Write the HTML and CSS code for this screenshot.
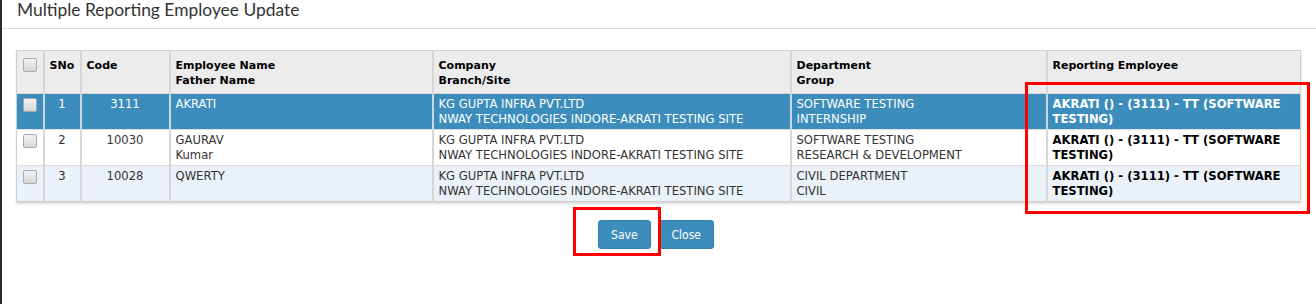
FILE: index.html
```html
<!DOCTYPE html>
<html lang="en">
<head>
  <meta charset="UTF-8" />
  <meta name="viewport" content="width=device-width, initial-scale=1" />
  <title>Multiple Reporting Employee Update</title>
  <link rel="stylesheet" href="styles.css">
</head>
<body>
  <div class="modal">
    <div class="modal-header">
      <h4>Multiple Reporting Employee Update</h4>
    </div>

    <div class="modal-body">
      <table class="grid">
        <colgroup>
          <col class="col-check">
          <col class="col-sno">
          <col class="col-code">
          <col class="col-emp">
          <col class="col-company">
          <col class="col-dept">
          <col class="col-rep">
        </colgroup>
        <thead>
          <tr>
            <th><span class="chk"></span></th>
            <th>SNo</th>
            <th>Code</th>
            <th>Employee Name<br>Father Name</th>
            <th>Company<br>Branch/Site</th>
            <th>Department<br>Group</th>
            <th>Reporting Employee</th>
          </tr>
        </thead>
        <tbody>
          <tr class="selected">
            <td><span class="chk"></span></td>
            <td class="center">1</td>
            <td class="center">3111</td>
            <td>AKRATI</td>
            <td>KG GUPTA INFRA PVT.LTD<br>NWAY TECHNOLOGIES INDORE-AKRATI TESTING SITE</td>
            <td>SOFTWARE TESTING<br>INTERNSHIP</td>
            <td class="rep">AKRATI () - (3111) - TT (SOFTWARE TESTING)</td>
          </tr>
          <tr>
            <td><span class="chk"></span></td>
            <td class="center">2</td>
            <td class="center">10030</td>
            <td>GAURAV<br>Kumar</td>
            <td>KG GUPTA INFRA PVT.LTD<br>NWAY TECHNOLOGIES INDORE-AKRATI TESTING SITE</td>
            <td>SOFTWARE TESTING<br>RESEARCH &amp; DEVELOPMENT</td>
            <td class="rep">AKRATI () - (3111) - TT (SOFTWARE TESTING)</td>
          </tr>
          <tr class="alt">
            <td><span class="chk"></span></td>
            <td class="center">3</td>
            <td class="center">10028</td>
            <td>QWERTY</td>
            <td>KG GUPTA INFRA PVT.LTD<br>NWAY TECHNOLOGIES INDORE-AKRATI TESTING SITE</td>
            <td>CIVIL DEPARTMENT<br>CIVIL</td>
            <td class="rep">AKRATI () - (3111) - TT (SOFTWARE TESTING)</td>
          </tr>
        </tbody>
      </table>

      <div class="actions">
        <button class="btn">Save</button>
        <button class="btn">Close</button>
      </div>
    </div>

    <!-- review markers from the original screenshot -->
    <div class="mark mark-rep"></div>
    <div class="mark mark-save"></div>
  </div>
</body>
</html>
```

FILE: styles.css
```css
:root {
  --primary: #3c8dbc;
  --primary-border: #367fa9;
  --grid-line: #d6d6d6;
}
html, body {
  margin: 0; height: 100%;
  background: #fff;
}
.modal {
  position: relative;
  min-height: 100%;
  border-left: 2px solid #222d32;
  box-sizing: border-box;
}
.modal-header {
  height: 28px;
  border-bottom: 1px solid #d9d9d9;
  padding: 0 15px;
}
.modal-header h4 {
  margin: 0;
  font-family: Lato, "Open Sans", sans-serif;
  font-weight: 400; font-size: 17.4px; line-height: 20px;
  color: #333;
}
.modal-body {
  padding: 21px 13px 0 14px;
}
.grid {
  width: 1285px;
  table-layout: fixed;
  border-collapse: collapse;
  border: 1px solid #cfcfcf;
  box-shadow: 0 2px 2px rgba(0,0,0,0.15);
  font-family: "DejaVu Sans", Verdana, sans-serif;
  font-size: 11.6px; line-height: 15px;
  color: #333;
}
.grid th, .grid td {
  text-align: left; vertical-align: top;
  border-left: 2px solid var(--grid-line);
  padding: 3px 5px 2px;
}
.grid th:first-child, .grid td:first-child { border-left: none; }
.grid th {
  background: #ececec; color: #000;
  font-size: 11px; font-weight: bold;
  padding: 7px 5px 5px;
  border-bottom: 1px solid #dadada;
}
.grid td { border-top: 1px solid #dcdcdc; }
.grid tbody tr:first-child td { border-top: none; }
.grid .center { text-align: center; }
.grid .rep { font-weight: bold; color: #000; }
.grid tr.selected td { background: var(--primary); color: #fff; border-left-color: #c8d7e2; }
.grid tr.selected td:first-child { border-left: none; }
.grid tr.alt td { background: #eaf1f9; }

.col-check { width: 27px; }
.col-sno { width: 37px; }
.col-code { width: 89px; }
.col-emp { width: 263px; }
.col-company { width: 358px; }
.col-dept { width: 256px; }

.chk {
  display: block;
  width: 12px; height: 12px; margin: 1px 0 0 1px;
  border: 1px solid #a9a9a9; border-radius: 2px;
  background: linear-gradient(#f2f2f2, #d8d8d8);
}
.grid thead .chk { margin-top: 0; }

.actions {
  display: flex; justify-content: center; gap: 8px;
  padding: 18px 7px 0 0;
}
.btn {
  background: var(--primary);
  border: 1px solid var(--primary-border);
  border-radius: 3px;
  color: #fff;
  font-family: "DejaVu Sans Condensed", "DejaVu Sans", sans-serif;
  font-size: 12px;
  height: 29px; padding: 0 12px;
  cursor: pointer;
}

.mark {
  position: absolute;
  border: 3px solid #f00;
  box-sizing: border-box;
}
.mark-rep { left: 1023px; top: 82px; width: 285px; height: 132px; }
.mark-save { left: 571px; top: 207px; width: 88px; height: 49px; }
```
